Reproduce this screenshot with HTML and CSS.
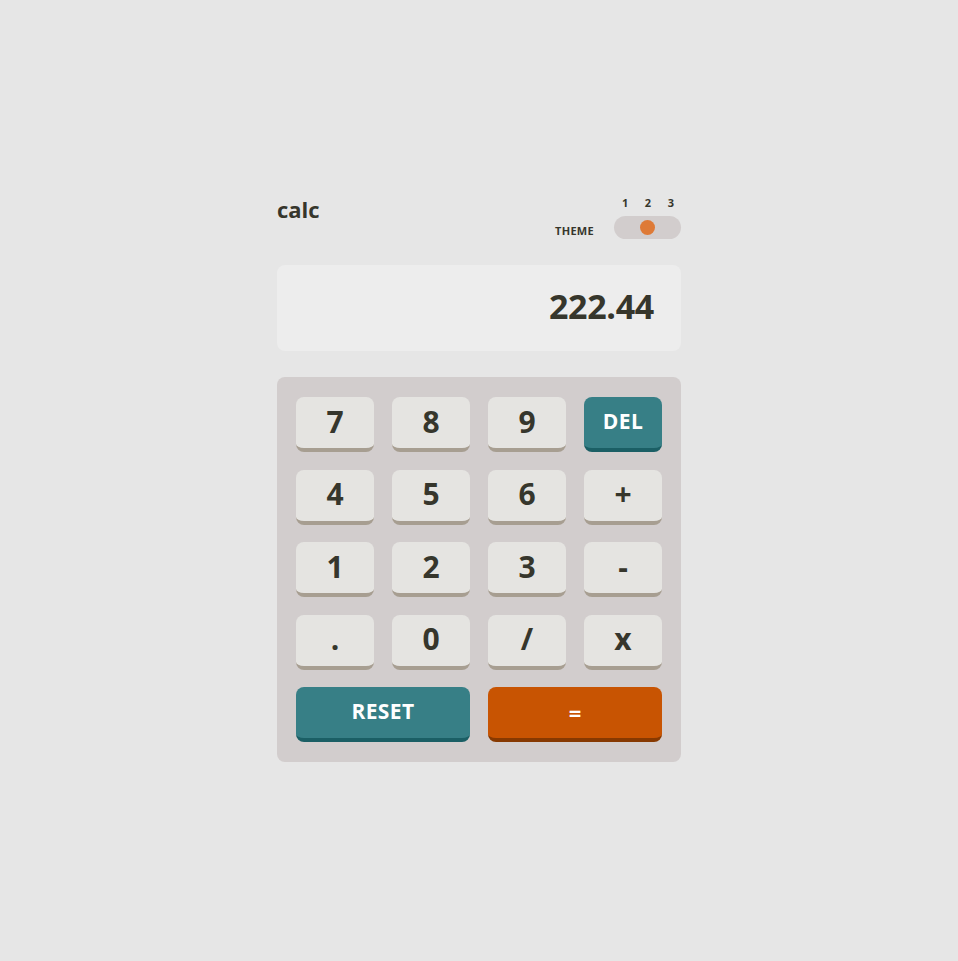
FILE: index.html
```html
<!DOCTYPE html>
<html lang="en">
<head>
<meta charset="utf-8">
<title>calc</title>
<link rel="stylesheet" href="styles.css">
</head>
<body>
<main class="calc">
  <header class="top">
    <h1 class="logo">calc</h1>
    <div class="theme">
      <span class="theme-label">THEME</span>
      <div class="theme-switch">
        <div class="theme-nums"><span>1</span><span>2</span><span>3</span></div>
        <div class="toggle"><span class="knob"></span></div>
      </div>
    </div>
  </header>
  <section class="screen">222.44</section>
  <section class="keypad">
    <button class="key">7</button>
    <button class="key">8</button>
    <button class="key">9</button>
    <button class="key key-alt">DEL</button>
    <button class="key">4</button>
    <button class="key">5</button>
    <button class="key">6</button>
    <button class="key">+</button>
    <button class="key">1</button>
    <button class="key">2</button>
    <button class="key">3</button>
    <button class="key">-</button>
    <button class="key">.</button>
    <button class="key">0</button>
    <button class="key">/</button>
    <button class="key">x</button>
    <button class="key key-alt key-wide">RESET</button>
    <button class="key key-eq key-wide">=</button>
  </section>
</main>
</body>
</html>
```

FILE: styles.css
```css
* { box-sizing: border-box; }
html, body { margin: 0; padding: 0; }
body {
  background: #e6e6e6;
  font-family: "Open Sans", "Liberation Sans", sans-serif;
  font-weight: 700;
  color: #36362c;
  min-height: 100vh;
  padding-bottom: 3px;
  display: flex;
  align-items: center;
  justify-content: center;
}
.calc {
  width: 404px;
  display: flex;
  flex-direction: column;
  gap: 26px;
}
.top {
  display: flex;
  justify-content: space-between;
  align-items: flex-start;
}
.logo {
  margin: 0;
  font-size: 22px;
  line-height: 1;
  letter-spacing: 0;
  padding-top: 2px;
}
.theme {
  display: flex;
  align-items: flex-end;
  gap: 20px;
}
.theme-label {
  font-size: 11px;
  letter-spacing: 0.3px;
  line-height: 1;
  padding-bottom: 3px;
}
.theme-switch {
  display: flex;
  flex-direction: column;
  width: 67px;
}
.theme-nums {
  display: flex;
  justify-content: space-between;
  padding: 0 7px 0 8px;
  font-size: 11px;
  line-height: 13px;
  margin-bottom: 7px;
}
.toggle {
  height: 23px;
  border-radius: 12px;
  background: #d2cdcd;
  display: flex;
  align-items: center;
  justify-content: center;
}
.knob {
  width: 15px;
  height: 15px;
  border-radius: 50%;
  background: #de7a37;
}
.screen {
  height: 86px;
  background: #ededed;
  border-radius: 8px;
  display: flex;
  align-items: center;
  justify-content: flex-end;
  padding: 0 27px 5px 0;
  font-size: 34px;
  letter-spacing: -0.3px;
}
.keypad {
  background: #d2cdcd;
  border-radius: 8px;
  padding: 20px 19px;
  display: grid;
  grid-template-columns: repeat(4, 78px);
  grid-auto-rows: 55px;
  column-gap: 18px;
  row-gap: 17.5px;
}
.key {
  font: inherit;
  color: #36362c;
  border: none;
  border-bottom: 4px solid #a79e91;
  border-radius: 8px;
  background: #e5e4e1;
  font-size: 30px;
  line-height: 1;
  padding: 0 0 2px;
  display: flex;
  align-items: center;
  justify-content: center;
}
.key-alt {
  background: #377f86;
  border-bottom-color: #1b5f65;
  color: #fff;
  font-size: 21px;
  letter-spacing: 0.4px;
}
.key-eq {
  background: #c85402;
  border-bottom-color: #873901;
  color: #fff;
  font-size: 22px;
}
.key-wide { grid-column: span 2; }
```
